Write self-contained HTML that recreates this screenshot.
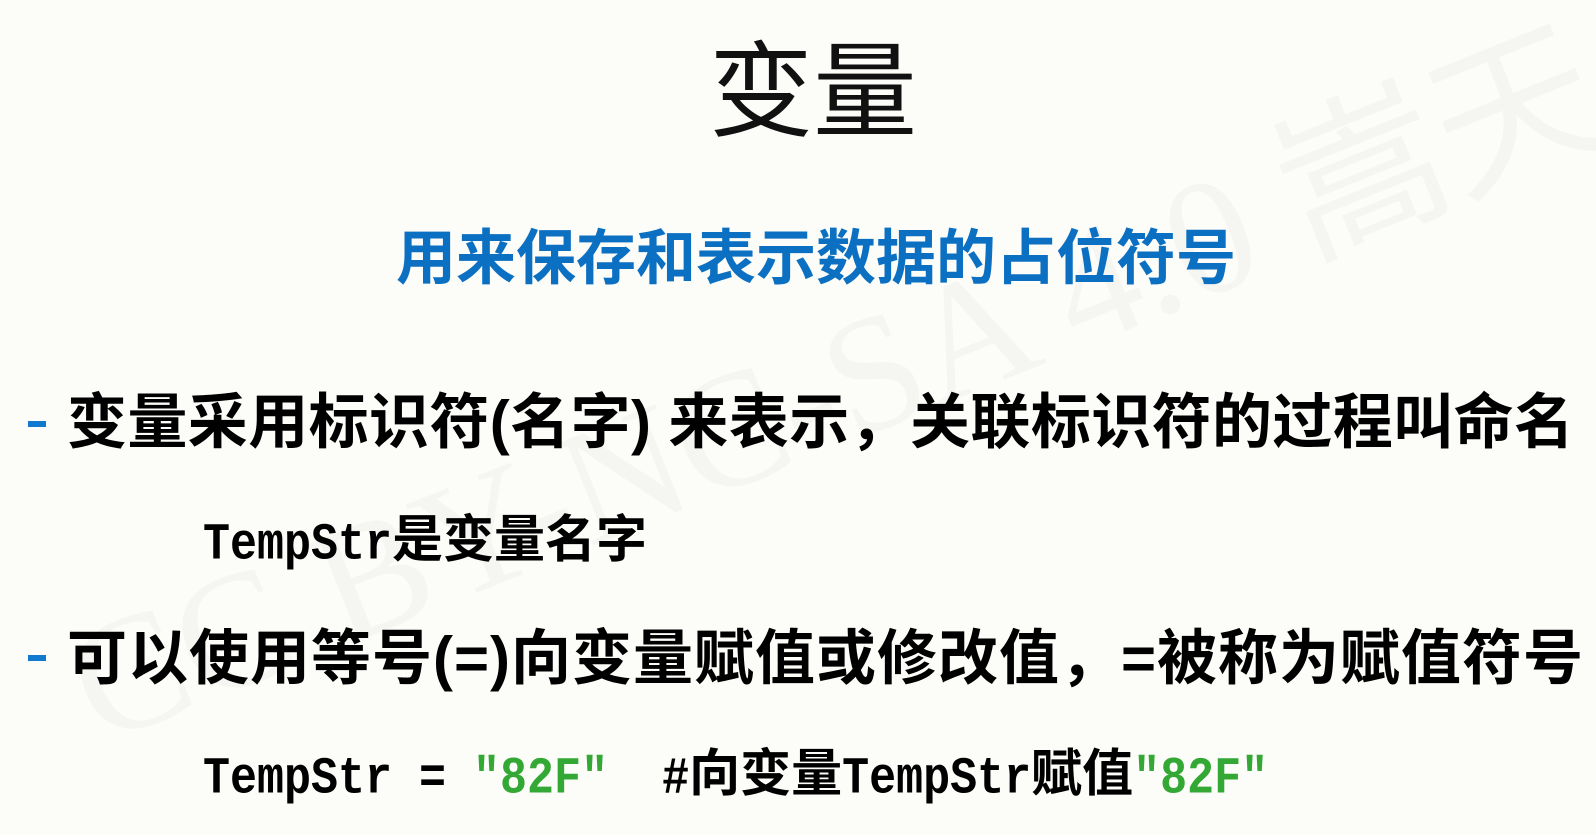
<!DOCTYPE html>
<html><head><meta charset="utf-8"><style>
body{margin:0;width:1596px;height:835px;background:#fcfcf8;overflow:hidden;position:relative;font-family:"Liberation Sans","Noto Sans CJK SC",sans-serif;}
.a{position:absolute;white-space:pre;}
.t{left:15px;width:1596px;text-align:center;top:28px;font-size:104px;color:#111;line-height:130px;}
.s{left:18px;width:1596px;text-align:center;top:224px;font-size:60px;font-weight:bold;color:#0b6fc2;line-height:70px;}
.b{left:67px;font-size:60px;font-weight:bold;color:#000;line-height:70px;}
.d{left:28px;width:18px;height:6px;background:#1279d0;}
.m{font-family:"Liberation Mono","Noto Sans CJK SC",monospace;font-size:45px;font-weight:bold;display:inline-block;transform:scaleY(1.15);}
.c{font-size:51px;font-weight:bold;}
.g{color:#33a834}
.w{left:110px;top:770px;font-family:"Liberation Serif","Noto Sans CJK SC",serif;font-size:165px;color:#f5f5f1;transform:rotate(-22deg);transform-origin:left bottom;line-height:165px;margin-top:-165px}
</style></head><body>
<div class="a w">CC BY-NC-SA 4.0 嵩天</div>
<div class="a t">变量</div>
<div class="a s">用来保存和表示数据的占位符号</div>
<div class="a d" style="top:421px"></div>
<div class="a b" style="top:388px;letter-spacing:0.4px">变量采用标识符(名字) 来表示，关联标识符的过程叫命名</div>
<div class="a" style="left:203px;top:510px;line-height:60px"><span class="m">TempStr</span><span class="c">是变量名字</span></div>
<div class="a d" style="top:655px"></div>
<div class="a b" style="top:624px;letter-spacing:1px">可以使用等号(=)向变量赋值或修改值，=被称为赋值符号</div>
<div class="a" style="left:203px;top:744px;line-height:60px"><span class="m">TempStr = <span class="g">"82F"</span>  #</span><span class="c">向变量</span><span class="m">TempStr</span><span class="c">赋值</span><span class="m g">"82F"</span></div>
</body></html>
